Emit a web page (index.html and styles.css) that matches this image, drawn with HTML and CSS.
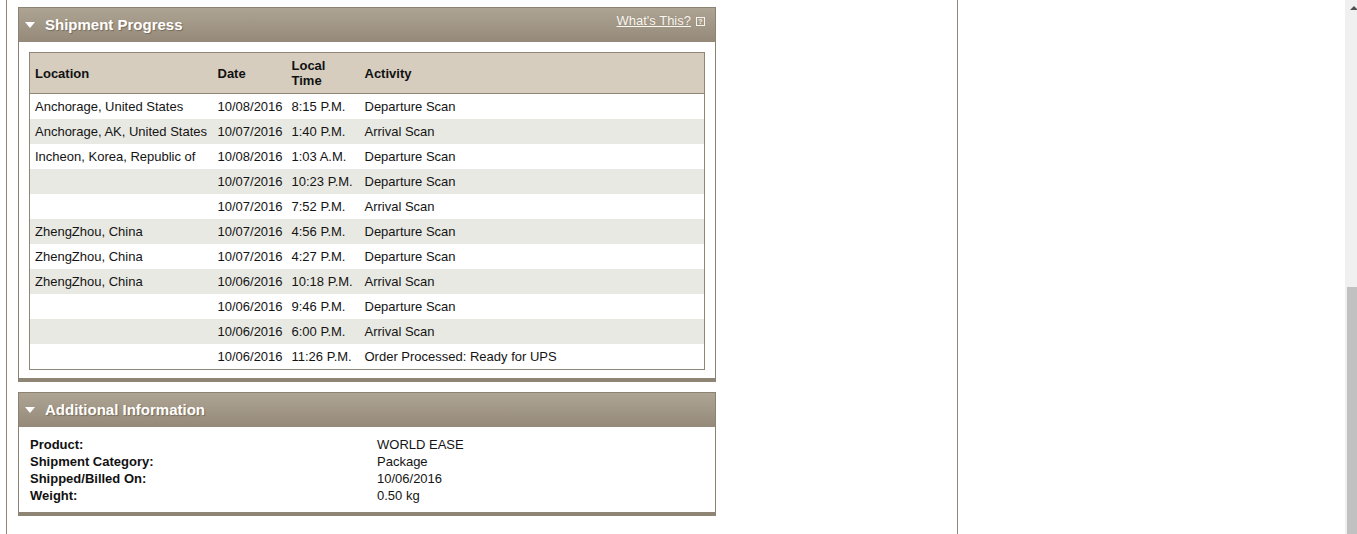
FILE: index.html
```html
<!DOCTYPE html>
<html>
<head>
<meta charset="utf-8">
<title>Shipment Progress</title>
<link rel="stylesheet" href="styles.css">
</head>
<body>
<div class="page">
  <div class="content">
    <section class="panel">
      <div class="panel-head">
        <div class="panel-title"><span class="tri"></span>Shipment Progress</div>
        <div class="help"><a href="#" class="help-link">What's This?</a><span class="help-icon">?</span></div>
      </div>
      <div class="panel-body">
        <table class="progress">
          <colgroup>
            <col class="c-loc"><col class="c-date"><col class="c-time"><col>
          </colgroup>
          <thead>
            <tr><th>Location</th><th>Date</th><th>Local Time</th><th>Activity</th></tr>
          </thead>
          <tbody>
            <tr><td>Anchorage, United States</td><td>10/08/2016</td><td>8:15 P.M.</td><td>Departure Scan</td></tr>
            <tr><td>Anchorage, AK, United States</td><td>10/07/2016</td><td>1:40 P.M.</td><td>Arrival Scan</td></tr>
            <tr><td>Incheon, Korea, Republic of</td><td>10/08/2016</td><td>1:03 A.M.</td><td>Departure Scan</td></tr>
            <tr><td></td><td>10/07/2016</td><td>10:23 P.M.</td><td>Departure Scan</td></tr>
            <tr><td></td><td>10/07/2016</td><td>7:52 P.M.</td><td>Arrival Scan</td></tr>
            <tr><td>ZhengZhou, China</td><td>10/07/2016</td><td>4:56 P.M.</td><td>Departure Scan</td></tr>
            <tr><td>ZhengZhou, China</td><td>10/07/2016</td><td>4:27 P.M.</td><td>Departure Scan</td></tr>
            <tr><td>ZhengZhou, China</td><td>10/06/2016</td><td>10:18 P.M.</td><td>Arrival Scan</td></tr>
            <tr><td></td><td>10/06/2016</td><td>9:46 P.M.</td><td>Departure Scan</td></tr>
            <tr><td></td><td>10/06/2016</td><td>6:00 P.M.</td><td>Arrival Scan</td></tr>
            <tr><td></td><td>10/06/2016</td><td>11:26 P.M.</td><td>Order Processed: Ready for UPS</td></tr>
          </tbody>
        </table>
      </div>
    </section>

    <section class="panel">
      <div class="panel-head">
        <div class="panel-title"><span class="tri"></span>Additional Information</div>
      </div>
      <div class="panel-body info">
        <div class="info-label">Product:</div><div class="info-value">WORLD EASE</div>
        <div class="info-label">Shipment Category:</div><div class="info-value">Package</div>
        <div class="info-label">Shipped/Billed On:</div><div class="info-value">10/06/2016</div>
        <div class="info-label">Weight:</div><div class="info-value">0.50 kg</div>
      </div>
    </section>
  </div>
  <div class="scrollbar">
    <span class="arrow-up"></span>
    <div class="thumb"></div>
  </div>
</div>
</body>
</html>
```

FILE: styles.css
```css
html, body {
  margin: 0;
  padding: 0;
  overflow: hidden;
  background: #ffffff;
}

body {
  font-family: "Liberation Sans", Arial, sans-serif;
  font-size: 13px;
  color: #141414;
}

.page {
  display: flex;
  height: 534px;
}

.content {
  margin-left: 6px;
  width: 952px;
  height: 534px;
  border-left: 1px solid #8f8677;
  border-right: 1px solid #8f8677;
  padding: 7px 0 0 11px;
  box-sizing: border-box;
  flex: none;
}

.scrollbar {
  margin-left: auto;
  width: 12px;
  height: 534px;
  background: #f0f0f0;
  display: flex;
  flex-direction: column;
  align-items: flex-end;
}

.arrow-up {
  width: 0;
  height: 0;
  margin: 6px -1px 0 0;
  border-left: 4px solid transparent;
  border-right: 4px solid transparent;
  border-bottom: 4px solid #505050;
}

.thumb {
  margin-top: auto;
  width: 10px;
  height: 247px;
  background: #c1c1c1;
}

.panel {
  width: 698px;
  box-sizing: border-box;
  border: 1px solid #8c8272;
  border-bottom: 4px solid #8f8574;
  margin-bottom: 10px;
  background: #fff;
}

.panel-head {
  height: 34px;
  display: flex;
  justify-content: space-between;
  background: linear-gradient(#aea493, #958a7a);
}

.panel-title {
  display: flex;
  align-items: center;
  padding-left: 6px;
  padding-bottom: 1px;
  color: #ffffff;
  font-weight: bold;
  font-size: 15px;
  text-shadow: 1px 1px 1px rgba(70, 60, 45, 0.45);
}

.tri {
  width: 0;
  height: 0;
  border-left: 5px solid transparent;
  border-right: 5px solid transparent;
  border-top: 6px solid #ffffff;
  margin-right: 10px;
  margin-top: 1px;
}

.help {
  display: flex;
  align-items: flex-start;
  padding: 5px 10px 0 0;
}

.help-link {
  color: #fbf8f2;
  font-size: 13px;
  line-height: 15px;
  text-decoration: underline;
  text-shadow: 0 0 1px rgba(70, 60, 45, 0.3);
}

.help-icon {
  margin: 4px 0 0 5px;
  width: 7px;
  height: 7px;
  border: 1px solid #f7f3ec;
  color: #f7f3ec;
  font-size: 7px;
  line-height: 7px;
  text-align: center;
  font-weight: bold;
}

.panel-body {
  padding: 10px 10px 8px 10px;
}

.progress {
  width: 676px;
  table-layout: fixed;
  border-collapse: collapse;
  border: 1px solid #8f8677;
}

.c-loc { width: 183px; }
.c-date { width: 74px; }
.c-time { width: 73px; }

.progress th {
  background: #d6cdbf;
  text-align: left;
  font-weight: bold;
  font-size: 13px;
  line-height: 15px;
  height: 40px;
  padding: 0 5px;
  border-bottom: 1px solid #8f8677;
  color: #111;
}

.progress td {
  height: 25px;
  padding: 0 5px;
  white-space: nowrap;
  line-height: 15px;
}

.progress tbody tr:nth-child(even) td {
  background: #e9e9e3;
}

.info {
  display: grid;
  grid-template-columns: 347px auto;
  padding: 9px 11px 8px 11px;
  line-height: 17px;
}

.info-label {
  font-weight: bold;
  color: #111;
}

.info-value {
  color: #141414;
}
```
